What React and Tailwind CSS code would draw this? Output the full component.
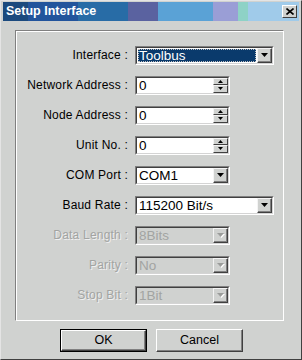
import React from "react";

const font = { fontFamily: '"Liberation Sans", Arial, sans-serif' };

function Arrow({ disabled }) {
  return (
    <div className="flex w-[15px] items-center justify-center border border-t-[#f4f4f4] border-l-[#f4f4f4] border-b-[#404040] border-r-[#404040] bg-[#d0d2d0] shadow-[inset_-1px_-1px_0_#808080]">
      <svg width="8" height="5" viewBox="0 0 8 5">
        {disabled && <path d="M1 1h7L4.5 5z" fill="#ffffff" />}
        <path d="M0 0h7L3.5 4z" fill={disabled ? "#9a9c9a" : "#000000"} />
      </svg>
    </div>
  );
}

function SpinBtn({ up }) {
  return (
    <div className="flex flex-1 items-center justify-center border border-t-[#f4f4f4] border-l-[#f4f4f4] border-b-[#404040] border-r-[#404040] bg-[#d0d2d0]">
      <svg width="5" height="3" viewBox="0 0 5 3">
        <path d={up ? "M2.5 0L5 3H0z" : "M0 0h5L2.5 3z"} fill="#000" />
      </svg>
    </div>
  );
}

function Sunken({ wide, disabled, children }) {
  return (
    <div
      className={`flex h-[19px] border border-t-[#808080] border-l-[#808080] border-b-white border-r-white ${
        wide ? "w-[139px]" : "w-[95px]"
      }`}
    >
      <div
        className={`flex flex-1 border border-t-[#404040] border-l-[#404040] border-b-[#d4d4d4] border-r-[#d4d4d4] ${
          disabled ? "bg-[#d0d2d0]" : "bg-white"
        }`}
      >
        {children}
      </div>
    </div>
  );
}

function Row({ label, disabled, children }) {
  return (
    <div className="flex h-[30px] items-center">
      <div
        className={`w-[112px] text-right text-[12px] tracking-[0.2px] ${
          disabled ? "text-[#a2a4a2] [text-shadow:1px_1px_0_#f0f0f0]" : "text-black"
        }`}
      >
        {label}
      </div>
      <div className="ml-[7px]">{children}</div>
    </div>
  );
}

function Spinner({ value }) {
  return (
    <Sunken>
      <span className="flex-1 pl-[2px] text-[13.5px] leading-[15px]">{value}</span>
      <div className="flex w-[15px] flex-col">
        <SpinBtn up />
        <SpinBtn />
      </div>
    </Sunken>
  );
}

function Combo({ value, wide, disabled, selected }) {
  return (
    <Sunken wide={wide} disabled={disabled}>
      <div className="flex flex-1 p-[1px]">
        <span
          className={`flex-1 pl-[1px] text-[13.5px] leading-[13px] ${
            selected
              ? "bg-[#0a3a6c] text-white outline outline-1 outline-dotted outline-[#c0c0c0] -outline-offset-1"
              : disabled
              ? "text-[#a2a4a2]"
              : "text-black"
          }`}
        >
          {value}
        </span>
      </div>
      <Arrow disabled={disabled} />
    </Sunken>
  );
}

function Button({ children, def }) {
  return (
    <div
      className={`flex h-[23px] w-[87px] items-center justify-center ${
        def ? "border border-black" : ""
      }`}
    >
      <div className="flex h-full w-full items-center justify-center border border-t-white border-l-white border-b-[#404040] border-r-[#404040] bg-[#d0d2d0] text-[12.5px] shadow-[inset_-1px_-1px_0_#808080]">
        {children}
      </div>
    </div>
  );
}

export default function App() {
  return (
    <div
      style={font}
      className="flex h-[360px] w-[302px] flex-col border border-t-[#e4e4e4] border-l-[#e4e4e4] border-b-[#404040] border-r-[#404040] bg-[#d0d2d0] px-[2px] pt-[1px]"
    >
      <div className="flex h-[19px] items-center justify-between bg-[linear-gradient(to_right,#1b4a7e_0_25px,#22549c_25px_75px,#286ca6_75px_125px,#5a62a0_125px_155px,#5aa2d6_155px_210px,#9a9ed6_210px_235px,#8ed2c6_235px_245px,#a0cbea_245px)] pl-[3px] pr-[2px]">
        <span className="text-[12.5px] font-bold text-white">Setup Interface</span>
        <div className="flex h-[13px] w-[15px] items-center justify-center border border-t-white border-l-white border-b-[#404040] border-r-[#404040] bg-[#d0d2d0]">
          <svg width="8" height="7" viewBox="0 0 8 7">
            <path d="M0.5 0.5l7 6M7.5 0.5l-7 6" stroke="#000" strokeWidth="1.6" />
          </svg>
        </div>
      </div>

      <div className="ml-[12px] mt-[9px] h-[291px] w-[269px] border border-t-[#808080] border-l-[#808080] border-b-white border-r-white shadow-[inset_1px_1px_0_#ffffff,1px_1px_0_#808080_inset] pt-[9px]">
        <Row label="Interface :">
          <Combo value="Toolbus" wide selected />
        </Row>
        <Row label="Network Address :">
          <Spinner value="0" />
        </Row>
        <Row label="Node Address :">
          <Spinner value="0" />
        </Row>
        <Row label="Unit No. :">
          <Spinner value="0" />
        </Row>
        <Row label="COM Port :">
          <Combo value="COM1" />
        </Row>
        <Row label="Baud Rate :">
          <Combo value="115200 Bit/s" wide />
        </Row>
        <Row label="Data Length :" disabled>
          <Combo value="8Bits" disabled />
        </Row>
        <Row label="Parity :" disabled>
          <Combo value="No" disabled />
        </Row>
        <Row label="Stop Bit :" disabled>
          <Combo value="1Bit" disabled />
        </Row>
      </div>

      <div className="mt-[8px] flex justify-center gap-[9px] pl-[1px]">
        <Button def>OK</Button>
        <Button>Cancel</Button>
      </div>
    </div>
  );
}
